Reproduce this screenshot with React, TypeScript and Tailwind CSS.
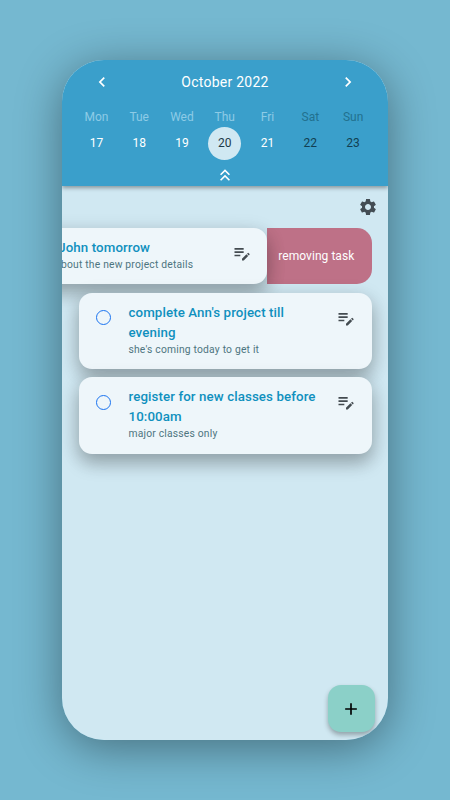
import { MdAdd, MdChevronLeft, MdChevronRight, MdEditNote, MdKeyboardDoubleArrowUp, MdSettings } from "react-icons/md";
import clsx from "clsx";

const DAYS = [
  { name: "Mon", date: 17 },
  { name: "Tue", date: 18 },
  { name: "Wed", date: 19 },
  { name: "Thu", date: 20 },
  { name: "Fri", date: 21 },
  { name: "Sat", date: 22, weekend: true },
  { name: "Sun", date: 23, weekend: true },
];

const SELECTED = 20;

type TaskProps = {
  title: string;
  note: string;
  className?: string;
};

function TaskCard({ title, note, className }: TaskProps) {
  return (
    <article
      className={clsx(
        "flex w-[293px] shrink-0 items-start rounded-[13px] bg-[#eef6fa] shadow-[0_10px_18px_rgba(0,0,0,0.22),0_4px_20px_rgba(0,0,0,0.14)]",
        className,
      )}
    >
      <span className="mt-[17.3px] ml-[17.3px] size-[15px] shrink-0 rounded-full border-[1.3px] border-[#1a73f0]" />
      <div className="mt-[10px] ml-[17.7px] w-[200px] whitespace-nowrap">
        <h2 className="text-[13.3px] leading-[20px] font-medium tracking-[0.1px] whitespace-pre-line text-[#1090be]">
          {title}
        </h2>
        <p className="text-[10.3px] leading-[14px] tracking-[0.2px] text-[#4d7580]">{note}</p>
      </div>
      <MdEditNote size={20} className="mt-[15px] ml-[8px] shrink-0 text-[#434b50]" />
    </article>
  );
}

function Calendar() {
  return (
    <header className="z-10 flex h-[126px] shrink-0 flex-col bg-[#3a9fcb] text-white shadow-[0_2px_4px_rgba(0,0,0,0.35)]">
      <div className="flex h-[44px] items-center justify-between px-[30px]">
        <MdChevronLeft size={20} />
        <h1 className="text-[14px] tracking-[0.25px]">October 2022</h1>
        <MdChevronRight size={20} />
      </div>
      <div className="grid grid-cols-7 pr-[13.5px] pl-[13px]">
        {DAYS.map((day) => (
          <div key={day.date} className="flex flex-col items-center">
            <span
              className={clsx(
                "h-[23px] pt-[4.5px] text-[12px] leading-[16px]",
                day.weekend ? "text-[#22718f]" : "text-[#8dcbe6]",
              )}
            >
              {day.name}
            </span>
            <span
              className={clsx(
                "flex size-[33px] items-center justify-center rounded-full pb-px text-[12px]",
                day.date === SELECTED && "bg-[#d0e8f2] text-[#1c3a48]",
                day.weekend && "text-[#123f52]",
              )}
            >
              {day.date}
            </span>
          </div>
        ))}
      </div>
      <MdKeyboardDoubleArrowUp size={20} className="mx-auto mt-[5px]" />
    </header>
  );
}

export default function App() {
  return (
    <div className="flex h-[800px] w-[450px] items-center justify-center overflow-hidden bg-[#75b8d0] font-['Roboto',sans-serif]">
      <div className="rounded-[42px] shadow-[0_8px_46px_rgba(0,0,0,0.4)]">
        <div className="relative flex h-[680px] w-[326px] flex-col overflow-hidden rounded-[42px] bg-[#d0e8f2]">
          <Calendar />

          <div className="flex h-[42px] shrink-0 items-center justify-end pr-[10px] pb-px">
            <MdSettings size={20} className="text-[#434d54]" />
          </div>

          {/* Task list, the first one is swiped away */}
          <main className="flex flex-col gap-[8.25px] px-[16.5px]">
            <div className="flex h-[56.4px] justify-end">
              <TaskCard
                title="meet John tomorrow"
                note="speak about the new project details"
                className="z-[1]"
              />
              <div className="flex w-[104.4px] shrink-0 items-center justify-center rounded-r-[15px] bg-[#be7187] pr-[6px] text-[12px] tracking-[0.05px] text-white">
                removing task
              </div>
            </div>
            <TaskCard
              title={"complete Ann's project till\nevening"}
              note="she's coming today to get it"
              className="z-[2] h-[76.5px]"
            />
            <TaskCard
              title={"register for new classes before\n10:00am"}
              note="major classes only"
              className="z-[3] h-[76.5px]"
            />
          </main>

          <button
            aria-label="Add task"
            className="absolute right-[13px] bottom-[8px] flex size-[47px] items-center justify-center rounded-[13px] bg-[#8bd0c8] pr-px text-black shadow-[0_3px_5px_rgba(0,0,0,0.3)]"
          >
            <MdAdd size={20} />
          </button>
        </div>
      </div>
    </div>
  );
}
